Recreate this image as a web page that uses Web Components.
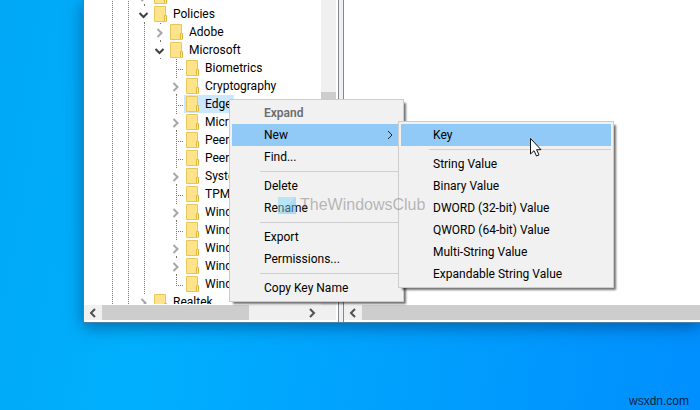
<!DOCTYPE html>
<html lang="en">
<head>
<meta charset="utf-8">
<title>Registry Editor</title>
<style>
  body {
    margin: 0;
    height: 100vh;
    overflow: hidden;
    font: 12px/18px Roboto, "Open Sans", sans-serif;
    color: #000;
  }
</style>
</head>
<body>
<reg-desktop></reg-desktop>

<script>
const define = (name, html, setup) => {
  const template = document.createElement('template');
  template.innerHTML = html;
  customElements.define(name, class extends HTMLElement {
    constructor() {
      super();
      this.attachShadow({ mode: 'open' }).append(template.content.cloneNode(true));
    }
    connectedCallback() {
      if (setup) setup(this, this.shadowRoot);
    }
  });
};

// One row of the tree. "lines" has a letter for each 16px indent column:
// | full line, t tee, l corner, > closed chevron, v open chevron, - nothing
define('tree-row', `
  <style>
    :host { display: flex; height: 18px; flex: none; white-space: nowrap; }
    svg { display: block; flex: none; }
    .guides { display: flex; }
    button { border: 0; padding: 0; margin: 0; background: none; width: 16px; height: 18px; }
    .label { display: flex; gap: 5px; padding: 0 2px; color: inherit; text-decoration: none; font: inherit; line-height: 18px; }
    :host([selected]) .label { background: #cce8ff; }
  </style>
  <div class="guides"></div>
  <a class="label" href="#">
    <svg width="14" height="18" viewBox="0 0 14 18">
      <path d="M.5 1.500h11v11.500h1v3.500H.5z" fill="#ffe38a" stroke="#e8c65b"/>
      <path d="M10.500 16v-5.500h2V16" fill="#ffe9a0" stroke="#e3b93d"/>
    </svg>
    <slot></slot>
  </a>
`, (el, root) => {
  const line = d => `<svg width="16" height="18" viewBox="0 0 16 18"><path d="${d}" fill="none" stroke="#777" stroke-dasharray="1 1"/></svg>`;
  const chevron = (d, color) => `<button aria-label="Toggle"><svg width="16" height="18" viewBox="0 0 16 18">
    <path d="M8.500 0v2M8.500 17v1" stroke="#777" stroke-dasharray="1 1"/>
    <path d="${d}" fill="none" stroke="${color}" stroke-width="2"/></svg></button>`;
  const parts = {
    '|': line('M8.500 0V18'),
    't': line('M8.500 0V18M10 10.500H16'),
    'l': line('M8.500 0V11M10 10.500H16'),
    '-': line(''),
    '>': chevron('M5.500 6l4 4-4 4', '#a6a6a6'),
    'v': chevron('M3.500 8l4 4 4-4', '#404040')
  };
  root.querySelector('.guides').innerHTML = [...el.getAttribute('lines')].map(c => parts[c]).join('');
});

define('scroll-bar', `
  <style>
    :host { display: flex; height: 15px; background: #f0f0f0; }
    button { border: 0; padding: 0; margin: 0; background: none; width: 18px; height: 15px; flex: none; }
    svg { display: block; margin: auto; }
    .thumb { flex: 1; background: #cdcdcd; }
    .room { width: 54px; flex: none; }
    :host([open-end]) .room, :host([open-end]) .next { display: none; }
    :host([vertical]) { display: block; height: auto; width: 15px; }
    :host([vertical]) button, :host([vertical]) .room { display: none; }
    :host([vertical]) .thumb { margin-top: 92px; height: 130px; }
  </style>
  <button aria-label="Scroll left"><svg width="8" height="10" viewBox="0 0 8 10"><path d="M6 1L2 5l4 4" fill="none" stroke="#505050" stroke-width="2"/></svg></button>
  <div class="thumb"></div>
  <div class="room"></div>
  <button class="next" aria-label="Scroll right"><svg width="8" height="10" viewBox="0 0 8 10"><path d="M2 1l4 4-4 4" fill="none" stroke="#505050" stroke-width="2"/></svg></button>
`);

define('menu-item', `
  <style>
    :host { display: block; }
    button {
      display: flex; align-items: center; justify-content: space-between;
      width: 100%; height: 22px; padding: 0 8px 0 32px; margin: 0; border: 0;
      background: none; font: inherit; color: inherit; text-align: left; white-space: nowrap;
    }
    :host([active]) button { background: #91c9f7; }
    :host([disabled]) button { color: #6d6d6d; font-weight: 600; }
    svg { display: none; }
    :host([submenu]) svg { display: block; }
  </style>
  <button role="menuitem"><slot></slot>
    <svg width="6" height="10" viewBox="0 0 6 10"><path d="M1 1l4 4-4 4" fill="none" stroke="#222"/></svg>
  </button>
`, (el, root) => {
  root.querySelector('button').disabled = el.hasAttribute('disabled');
});

define('menu-divider', `
  <style>
    :host { display: block; padding: 3px 0 3px 28px; }
    hr { margin: 0; border: 0; height: 1px; background: #d0d0d0; }
  </style>
  <hr>
`);

define('context-menu', `
  <style>
    :host {
      display: block; box-sizing: border-box; padding: 2px;
      background: #f1f1f1; border: 1px solid #ccc;
      box-shadow: 3px 3px 2px -1px rgba(0, 0, 0, .55);
    }
  </style>
  <div role="menu"><slot></slot></div>
`);

define('reg-window', `
  <style>
    :host {
      display: flex; box-sizing: border-box; background: #f0f0f0;
      border: solid #4a7fa8; border-width: 0 0 1px 1px;
      box-shadow: 0 4px 16px rgba(0, 40, 90, .5);
    }
    .pane { display: flex; flex-direction: column; background: #fff; padding-bottom: 2px; box-sizing: border-box; }
    .keys { width: 255px; flex: none; border-right: 1px solid #828790; padding-right: 2px; }
    .values { flex: 1; margin-left: 4px; border-left: 1px solid #828790; }
    .body { display: flex; flex: 1; min-height: 0; }
    .tree { flex: 1; min-width: 0; overflow: hidden; padding-left: 20px; display: flex; flex-direction: column; margin-bottom: 1px; }
    .tree tree-row:first-child { margin-top: -13px; }
    tree-row { align-self: flex-start; }
    .bottom { display: flex; background: #f0f0f0; }
    .bottom scroll-bar { flex: 1; }
    .corner { width: 15px; }
  </style>
  <section class="pane keys">
    <div class="body">
      <div class="tree">
        <tree-row lines="||>"></tree-row>
        <tree-row lines="||v">Policies</tree-row>
        <tree-row lines="|||>">Adobe</tree-row>
        <tree-row lines="|||v">Microsoft</tree-row>
        <tree-row lines="|||-t">Biometrics</tree-row>
        <tree-row lines="|||->">Cryptography</tree-row>
        <tree-row lines="|||-t" selected>Edge</tree-row>
        <tree-row lines="|||->">Micr</tree-row>
        <tree-row lines="|||-t">Peer</tree-row>
        <tree-row lines="|||-t">Peer</tree-row>
        <tree-row lines="|||->">Syste</tree-row>
        <tree-row lines="|||-t">TPM</tree-row>
        <tree-row lines="|||->">Wind</tree-row>
        <tree-row lines="|||-t">Wind</tree-row>
        <tree-row lines="|||->">Wind</tree-row>
        <tree-row lines="|||->">Wind</tree-row>
        <tree-row lines="|||-l">Wind</tree-row>
        <tree-row lines="||>">Realtek</tree-row>
      </div>
      <scroll-bar vertical></scroll-bar>
    </div>
    <div class="bottom"><scroll-bar></scroll-bar><div class="corner"></div></div>
  </section>
  <section class="pane values">
    <div class="body"></div>
    <div class="bottom"><scroll-bar open-end></scroll-bar></div>
  </section>
`);

define('reg-desktop', `
  <style>
    :host {
      display: block; position: relative; height: 100vh; overflow: hidden;
      background: linear-gradient(100deg, #00a8f6 0%, #00b0fe 25%, #00a0fd 60%, #008fff 100%);
    }
    reg-window { margin-left: 83px; height: calc(100vh - 87px); }
    context-menu, .mark, .site, .pointer { position: absolute; }
    .main { left: 229px; top: 99px; width: 175px; }
    .sub { left: 398px; top: 121px; width: 216px; }
    .mark {
      left: 278px; top: 195px; display: flex; align-items: center; gap: 4px;
      font: 16px/20px "Liberation Sans", sans-serif; color: rgba(120, 120, 120, .5);
    }
    .site { right: 11px; bottom: 1px; font: 12px/16px "Liberation Sans", sans-serif; color: #0a2540; }
    .pointer { left: 529px; top: 137px; }
  </style>
  <reg-window></reg-window>
  <context-menu class="main">
    <menu-item disabled>Expand</menu-item>
    <menu-item active submenu>New</menu-item>
    <menu-item>Find...</menu-item>
    <menu-divider></menu-divider>
    <menu-item>Delete</menu-item>
    <menu-item>Rename</menu-item>
    <menu-divider></menu-divider>
    <menu-item>Export</menu-item>
    <menu-item>Permissions...</menu-item>
    <menu-divider></menu-divider>
    <menu-item>Copy Key Name</menu-item>
  </context-menu>
  <context-menu class="sub">
    <menu-item active>Key</menu-item>
    <menu-divider></menu-divider>
    <menu-item>String Value</menu-item>
    <menu-item>Binary Value</menu-item>
    <menu-item>DWORD (32-bit) Value</menu-item>
    <menu-item>QWORD (64-bit) Value</menu-item>
    <menu-item>Multi-String Value</menu-item>
    <menu-item>Expandable String Value</menu-item>
  </context-menu>
  <div class="mark">
    <svg width="18" height="18" viewBox="0 0 18 18">
      <path d="M0 1h18L0 18z" fill="#7fdcf8" opacity=".5"/>
      <path d="M18 1v17H0z" fill="#6fc4f4" opacity=".5"/>
    </svg>
    <span>TheWindowsClub</span>
  </div>
  <svg class="pointer" width="13" height="21" viewBox="0 0 13 21">
    <path d="M1.500 1.500v15.500l3.500-3.300 2.500 5.300 2.500-1.100-2.400-5.200h4.400z" fill="#fff" stroke="#111"/>
  </svg>
  <span class="site">wsxdn.com</span>
`);
</script>
</body>
</html>
